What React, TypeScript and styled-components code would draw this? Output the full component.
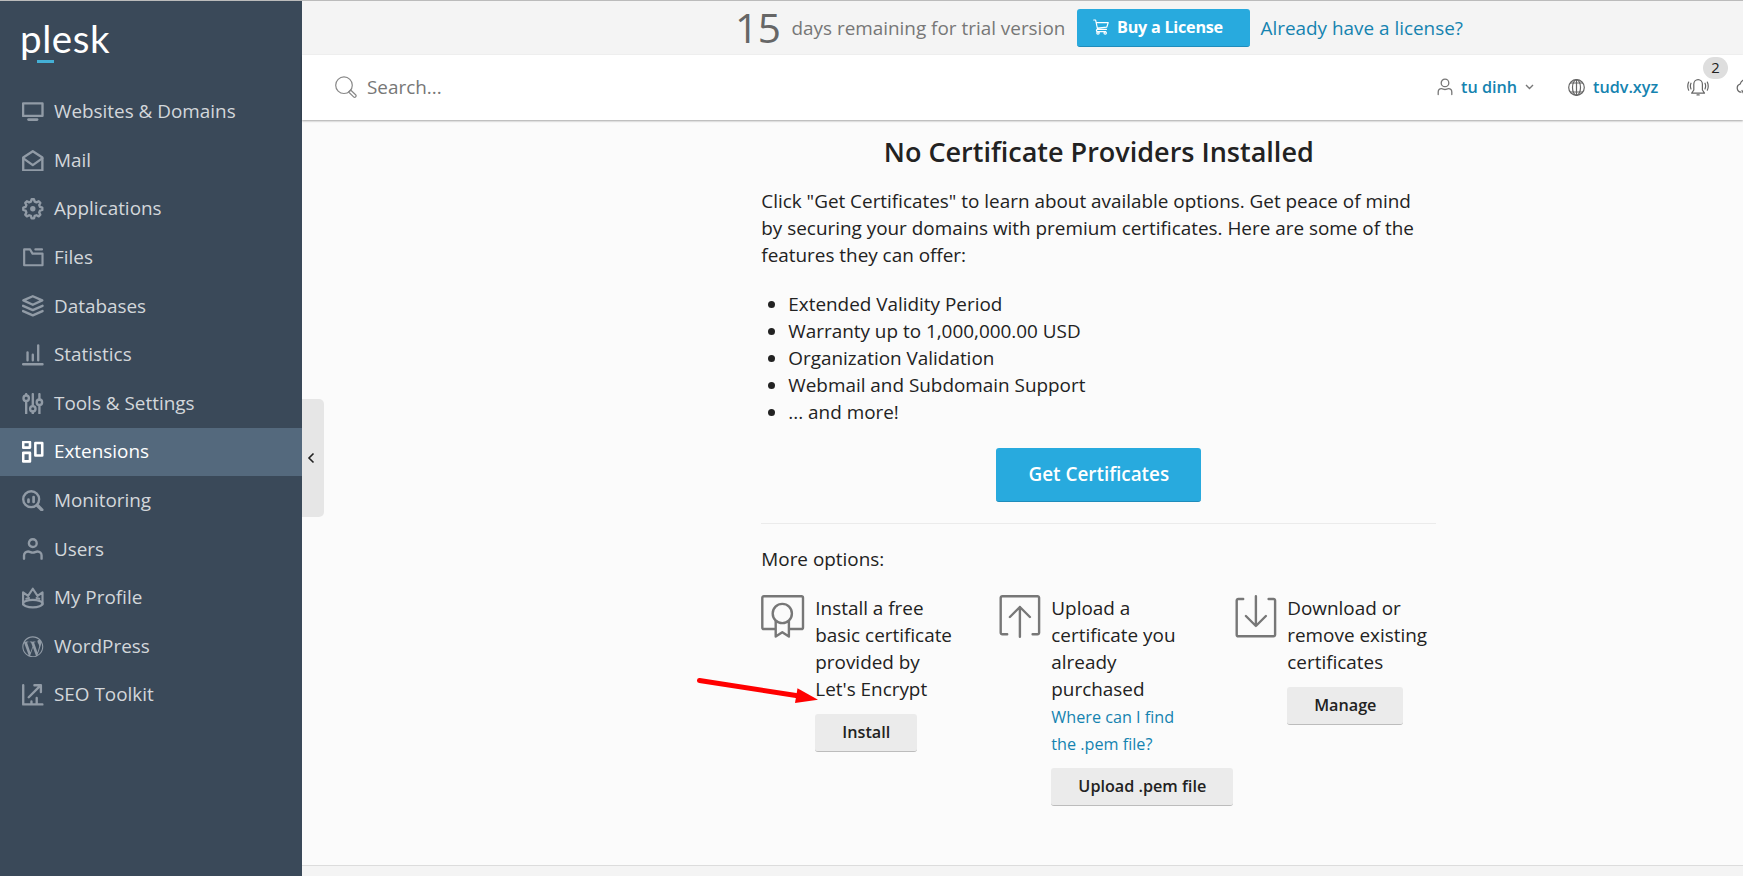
import React from 'react';
import styled, { createGlobalStyle, css } from 'styled-components';
import { FaWordpressSimple } from 'react-icons/fa';

const GlobalStyle = createGlobalStyle`
  *, *::before, *::after { box-sizing: border-box; }
  body {
    margin: 0;
    overflow: hidden;
    font-family: "Open Sans", "Noto Sans", sans-serif;
    font-size: 18.9px;
    line-height: 27px;
    color: #222;
    background: #fbfbfb;
  }
`;

const Page = styled.div`
  display: flex;
  width: 100vw;
  height: 100vh;
  border-top: 1px solid #bbb;
  overflow: hidden;
`;

/* ---------- sidebar ---------- */

const Sidebar = styled.aside`
  flex: 0 0 302px;
  background: #3a4959;
`;

const Brand = styled.div`
  position: relative;
  height: 86.5px;
  padding: 15px 0 0 20px;
  font-family: Lato, sans-serif;
  font-size: 38.5px;
  line-height: 44px;
  letter-spacing: 0.6px;
  color: #fff;

  &::after {
    content: '';
    position: absolute;
    left: 37px;
    top: 59px;
    width: 17px;
    height: 3px;
    background: #44b0d6;
  }
`;

const NavItem = styled.a<{ $active?: boolean }>`
  display: flex;
  align-items: center;
  gap: 10.4px;
  height: 48.6px;
  padding-left: 22px;
  color: #d3d7db;
  font-weight: 500;

  svg {
    flex: none;
    width: 21.6px;
    height: 21.6px;
    color: #919ba6;
  }

  ${(p) =>
    p.$active &&
    css`
      background: #54697d;
      color: #fff;
      svg { color: #fff; }
    `}
`;

const NavLabel = styled.span`
  white-space: nowrap;
`;

/* ---------- right side ---------- */

const Main = styled.main`
  position: relative;
  flex: 1;
  min-width: 0;
  display: flex;
  flex-direction: column;
`;

const TrialBar = styled.div`
  flex: 0 0 54px;
  display: flex;
  align-items: center;
  padding-left: 433px;
  background: #f4f4f4;
  color: #777;
  white-space: nowrap;
`;

const Days = styled.span`
  width: 56.5px;
  font-size: 40.5px;
  line-height: 54px;
  color: #666;
  letter-spacing: -0.5px;
`;

const TrialText = styled.span`
  width: 285.5px;
`;

const Link = styled.a`
  color: #1583b0;
`;

const BuyButton = styled.button`
  display: flex;
  align-items: center;
  gap: 8px;
  width: 173px;
  height: 38px;
  margin-right: 10.5px;
  padding: 0 0 2px 16px;
  border: 0;
  border-bottom: 1px solid #1f8cbb;
  border-radius: 3px;
  background: #28aade;
  color: #fff;
  font: 700 16.2px/24px "Open Sans", sans-serif;
  letter-spacing: -0.25px;
`;

const Header = styled.header`
  z-index: 1;
  flex: 0 0 65px;
  display: flex;
  align-items: center;
  background: #fff;
  box-shadow: 0 1px 2px rgba(0, 0, 0, 0.35);
  white-space: nowrap;
`;

const Search = styled.div`
  flex: 1;
  display: flex;
  align-items: center;
  gap: 10px;
  padding-left: 33px;
  color: #777;
`;

const HeaderTools = styled.div`
  flex: none;
  width: 306px;
  padding-bottom: 1px;
  display: flex;
  align-items: center;
  color: #666;
  font-size: 16.2px;
  font-weight: 600;

  svg { flex: none; }
`;

const Account = styled.div<{ $width: number }>`
  flex: 0 0 ${(p) => p.$width}px;
  display: flex;
  align-items: center;
  gap: 8px;
`;

const BellBox = styled.div`
  position: relative;
  display: flex;
  flex: 0 0 49px;
`;

const Badge = styled.span`
  position: absolute;
  left: 16px;
  top: -21px;
  width: 25px;
  height: 22px;
  border-radius: 11px;
  background: #dedede;
  color: #222;
  font-size: 14.8px;
  font-weight: 500;
  line-height: 21px;
  text-align: center;
`;

const Content = styled.section`
  flex: 1;
  width: 675px;
  margin-left: 459.3px;
  padding-top: 14px;
`;

const Title = styled.h1`
  margin: 0 0 18px;
  font-size: 27px;
  line-height: 36px;
  font-weight: 600;
  text-align: center;
  white-space: nowrap;
`;

const Paragraph = styled.p`
  margin: 0 0 22px;
  white-space: nowrap;
`;

const Features = styled.ul`
  margin: 0 0 22px;
  padding-left: 27px;
`;

const PrimaryButton = styled.button`
  display: block;
  width: 205px;
  height: 54px;
  margin: 0 auto 21px;
  padding: 0;
  border: 0;
  border-bottom: 1px solid #1f8cbb;
  border-radius: 3px;
  background: #28aade;
  color: #fff;
  font: 600 18.9px/27px "Open Sans", sans-serif;
`;

const Divider = styled.hr`
  height: 1px;
  margin: 0 0 22px;
  border: 0;
  background: #ebebeb;
`;

const Options = styled.div`
  display: grid;
  grid-template-columns: 236px 236px 203px;
  margin-top: 21px;
`;

const Option = styled.div`
  display: grid;
  grid-template-columns: 54px 1fr;
  white-space: nowrap;
`;

const OptionBody = styled.div`
  padding-top: 1px;
`;

const HelpLink = styled(Link)`
  display: block;
  margin-bottom: -1px;
  padding-top: 1px;
  font-size: 16.2px;
`;

const Button = styled.button<{ $width: number }>`
  display: block;
  width: ${(p) => p.$width}px;
  height: 38px;
  margin-top: 11px;
  padding: 0 0 2px;
  border: 0;
  border-bottom: 1px solid #bcbcbc;
  border-radius: 3px;
  background: #ebebeb;
  color: #222;
  font: 600 16.2px/24px "Open Sans", sans-serif;
  white-space: nowrap;
`;

const Footer = styled.footer`
  flex: 0 0 11px;
  border-top: 1px solid #dcdcdc;
  background: #f4f4f4;
`;

const Handle = styled.button`
  position: absolute;
  z-index: 2;
  left: 0;
  top: 398px;
  width: 22px;
  height: 118px;
  padding: 0 0 0 5px;
  border: 0;
  border-radius: 0 5px 5px 0;
  background: #e6e6e6;
  display: flex;
  align-items: center;
`;

const Pointer = styled.svg`
  position: absolute;
  left: 392px;
  top: 672px;
`;

/* ---------- icons ---------- */

const Glyph = ({ children, w = 1.75 }: { children: React.ReactNode; w?: number }) => (
  <svg viewBox="0 0 16 16" fill="none" stroke="currentColor" strokeWidth={w} strokeLinecap="round" strokeLinejoin="round">
    {children}
  </svg>
);

const gearPath = (() => {
  const pts: string[] = [];
  for (let i = 0; i < 8; i++) {
    const at = (deg: number, r: number) => {
      const a = ((i * 45 + deg - 90) * Math.PI) / 180;
      return `${(8 + r * Math.cos(a)).toFixed(2)} ${(8 + r * Math.sin(a)).toFixed(2)}`;
    };
    pts.push(`${i ? 'L' : 'M'}${at(-7, 7.1)}L${at(7, 7.1)}L${at(15, 5.5)}L${at(30, 5.5)}`);
  }
  return pts.join('') + 'Z';
})();

const personBody = 'M1.5 15.3V13a3 3 0 0 1 3-3c1.5 0 2 .8 3.5.8s2-.8 3.5-.8a3 3 0 0 1 3 3v2.3';

const icons = {
  monitor: (
    <Glyph>
      <rect x="0.8" y="1.8" width="14.4" height="9.2" />
      <path d="M4.8 13.8h6.4" strokeWidth="1.9" />
    </Glyph>
  ),
  mail: (
    <Glyph>
      <path d="M8 .9l7.1 4.7v9.5H.9V5.6z" />
      <path d="M1 6.2l7 5 7-5" />
    </Glyph>
  ),
  gear: (
    <Glyph>
      <path d={gearPath} />
      <circle cx="8" cy="8" r="2" fill="currentColor" stroke="none" />
    </Glyph>
  ),
  folder: (
    <Glyph w={1.6}>
      <path d="M1.6 1.8H6l1.8 3.1h7.4v8.6H1.6z" />
      <path d="M9.9 1.8h4.9" />
    </Glyph>
  ),
  layers: (
    <Glyph>
      <path d="M8 .9l7 3.1-7 3.2L1 4z" />
      <path d="M.8 8L8 11.2 15.2 8M.8 11.9L8 15.1l7.2-3.2" />
    </Glyph>
  ),
  stats: (
    <Glyph>
      <path d="M.8 15h14.4M4.1 6.2v5.8M8 8v4M12 1v11" />
    </Glyph>
  ),
  tools: (
    <Glyph>
      <path d="M3.1.8v1M3.1 6v9.2M8 .8v8.4M8 13.6v1.6M12.9.8v4M12.9 9v6.2" />
      <circle cx="3.1" cy="3.8" r="2" />
      <circle cx="8" cy="11.7" r="2" />
      <circle cx="12.9" cy="6.8" r="2" />
    </Glyph>
  ),
  blocks: (
    <Glyph w={1.9}>
      <rect x="0.9" y="0.8" width="5" height="4.1" />
      <rect x="0.9" y="8.8" width="5" height="6.3" />
      <rect x="9.9" y="1.5" width="5.1" height="9.2" />
    </Glyph>
  ),
  monitoring: (
    <Glyph>
      <circle cx="6.8" cy="6.8" r="5.9" />
      <path d="M11.5 11.5l3.2 3.2" strokeWidth="2.5" />
      <path d="M4.8 7.2v1.6M8.6 5.2v3.6" strokeWidth="2" />
    </Glyph>
  ),
  user: (
    <Glyph>
      <circle cx="8" cy="3.8" r="2.9" />
      <path d={personBody} />
    </Glyph>
  ),
  crown: (
    <Glyph w={1.6}>
      <path d="M.8 13V4l3.7 2.6L8 1.3l3.5 5.3L15.2 4v9" />
      <path d="M3.2 8.7l2-.5M10.8 8.2l2 .5" />
      <ellipse cx="8" cy="12.3" rx="7.2" ry="2.8" />
    </Glyph>
  ),
  wordpress: <FaWordpressSimple />,
  seo: (
    <Glyph>
      <path d="M.9.9v14.2h14.2M5 9.8l8.6-8.6M9.2.9H14v5M7 13v2M10.9 10.4V15" />
    </Glyph>
  ),
};

const nav: { label: string; icon: keyof typeof icons; active?: boolean }[] = [
  { label: 'Websites & Domains', icon: 'monitor' },
  { label: 'Mail', icon: 'mail' },
  { label: 'Applications', icon: 'gear' },
  { label: 'Files', icon: 'folder' },
  { label: 'Databases', icon: 'layers' },
  { label: 'Statistics', icon: 'stats' },
  { label: 'Tools & Settings', icon: 'tools' },
  { label: 'Extensions', icon: 'blocks', active: true },
  { label: 'Monitoring', icon: 'monitoring' },
  { label: 'Users', icon: 'user' },
  { label: 'My Profile', icon: 'crown' },
  { label: 'WordPress', icon: 'wordpress' },
  { label: 'SEO Toolkit', icon: 'seo' },
];

const CartIcon = () => (
  <svg width="16" height="16" viewBox="0 0 16 16" fill="none" stroke="#fff" strokeWidth="1.2" strokeLinecap="round" strokeLinejoin="round">
    <path d="M.7 1h1.9l2 9.4h8.8M3.2 3.6h12l-1.4 4.6-9.4 1" />
    <path d="M4.6 10.4c-1.6.2-1.6 2.2 0 2.2h8" />
    <circle cx="5" cy="14" r="1.2" />
    <circle cx="12.2" cy="14" r="1.2" />
  </svg>
);

const SearchIcon = () => (
  <svg width="22" height="23" viewBox="0 0 22 23" fill="none" stroke="#888" strokeWidth="1.2">
    <circle cx="9" cy="9.2" r="8.3" />
    <path d="M13.6 16l2-2 5 4.8a1.45 1.45 0 0 1-2 2.1z" strokeLinejoin="round" />
  </svg>
);

const PersonIcon = () => (
  <svg width="16" height="18" viewBox="0 0 16 18" fill="none" stroke="#777" strokeWidth="1.3" strokeLinecap="round">
    <circle cx="8" cy="4.9" r="3.8" />
    <path d="M1.2 16.5v-2.6a3.3 3.3 0 0 1 3.3-3.2c1.5 0 2 .8 3.5.8s2-.8 3.5-.8a3.3 3.3 0 0 1 3.3 3.2v2.6" />
  </svg>
);

const GlobeIcon = () => (
  <svg width="17" height="17" viewBox="0 0 17 17" fill="none" stroke="#666" strokeWidth="1.2">
    <circle cx="8.5" cy="8.5" r="7.8" />
    <ellipse cx="8.5" cy="8.5" rx="4" ry="7.8" />
    <path d="M8.5.7v15.6M2.2 4h12.6M2.2 13h12.6" />
  </svg>
);

const BellIcon = () => (
  <svg width="22" height="18" viewBox="0 0 22 18" fill="none" stroke="#666" strokeWidth="1.2" strokeLinecap="round" strokeLinejoin="round">
    <path d="M6.8 12V6.2a4.3 4.6 0 0 1 8.6 0V12l2.1 3.2H4.7z" />
    <path d="M10 16.9h2.2M4 5.2c-.8 1.8-.8 4 0 5.8M18 5.2c.8 1.8.8 4 0 5.8M1.7 4c-1.2 2.7-1.2 5.6 0 8.2M20.3 4c1.2 2.7 1.2 5.6 0 8.2" />
  </svg>
);

const CloudIcon = () => (
  <svg width="22" height="18" viewBox="0 0 22 18" fill="none" stroke="#666" strokeWidth="1.2" strokeLinecap="round">
    <path d="M5 14.2a4.2 4.2 0 0 1-.8-8.2 6 6 0 0 1 11.6 0 4.2 4.2 0 0 1 1 8.2M6 12.5l2 4" />
  </svg>
);

const OptionIcon = ({ children }: { children: React.ReactNode }) => (
  <svg width="45" height="45" viewBox="0 0 45 45" fill="none" stroke="#777" strokeWidth="2.4" strokeLinecap="round" strokeLinejoin="round">
    {children}
  </svg>
);

const CertificateIcon = () => (
  <OptionIcon>
    <path d="M13.5 35H2.9a1.6 1.6 0 0 1-1.6-1.6V3.8a1.6 1.6 0 0 1 1.6-1.6h37.5A1.6 1.6 0 0 1 42 3.8v29.6a1.6 1.6 0 0 1-1.6 1.6H29" />
    <circle cx="21.3" cy="19.5" r="9.6" />
    <path d="M14.7 27v15.5l6.6-4.2 6.6 4.2V27" />
  </OptionIcon>
);

const UploadIcon = () => (
  <OptionIcon>
    <path d="M10.2 40.3H5.3a1.6 1.6 0 0 1-1.6-1.6V3.8a1.6 1.6 0 0 1 1.6-1.6h35.2a1.6 1.6 0 0 1 1.6 1.6v34.9a1.6 1.6 0 0 1-1.6 1.6h-4.9" />
    <path d="M22.9 42.8V13M12.9 23l10-10 10 10" />
  </OptionIcon>
);

const DownloadIcon = () => (
  <OptionIcon>
    <path d="M10.2 5H5.3a1.6 1.6 0 0 0-1.6 1.6v34.1a1.6 1.6 0 0 0 1.6 1.6h35.2a1.6 1.6 0 0 0 1.6-1.6V6.6A1.6 1.6 0 0 0 40.5 5h-4.9" />
    <path d="M22.9 2.2v29.6M12.9 22l10 10 10-10" />
  </OptionIcon>
);

export default function App() {
  return (
    <>
      <GlobalStyle />
      <Page>
        <Sidebar>
          <Brand>plesk</Brand>
          <nav>
            {nav.map((n) => (
              <NavItem key={n.label} $active={n.active}>
                {icons[n.icon]}
                <NavLabel>{n.label}</NavLabel>
              </NavItem>
            ))}
          </nav>
        </Sidebar>
        <Main>
          <TrialBar>
            <Days>15</Days>
            <TrialText>days remaining for trial version</TrialText>
            <BuyButton>
              <CartIcon />
              Buy a License
            </BuyButton>
            <Link>Already have a license?</Link>
          </TrialBar>
          <Header>
            <Search>
              <SearchIcon />
              <span>Search...</span>
            </Search>
            <HeaderTools>
              <Account $width={131}>
                <PersonIcon />
                <Link>tu dinh</Link>
                <svg width="9" height="6" viewBox="0 0 9 6" fill="none" stroke="#777" strokeWidth="1.4">
                  <path d="M1 1l3.5 3.5L8 1" />
                </svg>
              </Account>
              <Account $width={119}>
                <GlobeIcon />
                <Link>tudv.xyz</Link>
              </Account>
              <BellBox>
                <BellIcon />
                <Badge>2</Badge>
              </BellBox>
              <CloudIcon />
            </HeaderTools>
          </Header>
          <Content>
            <Title>No Certificate Providers Installed</Title>
            <Paragraph>
              Click "Get Certificates" to learn about available options. Get peace of mind
              <br />
              by securing your domains with premium certificates. Here are some of the
              <br />
              features they can offer:
            </Paragraph>
            <Features>
              <li>Extended Validity Period</li>
              <li>Warranty up to 1,000,000.00 USD</li>
              <li>Organization Validation</li>
              <li>Webmail and Subdomain Support</li>
              <li>... and more!</li>
            </Features>
            <PrimaryButton>Get Certificates</PrimaryButton>
            <Divider />
            <div>More options:</div>
            <Options>
              <Option>
                <CertificateIcon />
                <OptionBody>
                  Install a free
                  <br />
                  basic certificate
                  <br />
                  provided by
                  <br />
                  Let's Encrypt
                  <Button $width={102}>Install</Button>
                </OptionBody>
              </Option>
              <Option>
                <UploadIcon />
                <OptionBody>
                  Upload a
                  <br />
                  certificate you
                  <br />
                  already
                  <br />
                  purchased
                  <HelpLink>
                    Where can I find
                    <br />
                    the .pem file?
                  </HelpLink>
                  <Button $width={182}>Upload .pem file</Button>
                </OptionBody>
              </Option>
              <Option>
                <DownloadIcon />
                <OptionBody>
                  Download or
                  <br />
                  remove existing
                  <br />
                  certificates
                  <Button $width={116}>Manage</Button>
                </OptionBody>
              </Option>
            </Options>
          </Content>
          <Footer />
          <Handle>
            <svg width="8" height="12" viewBox="0 0 8 12" fill="none" stroke="#222" strokeWidth="1.6">
              <path d="M6.5 1.5L2 6l4.5 4.5" />
            </svg>
          </Handle>
          <Pointer width="128" height="34" viewBox="0 0 128 34" fill="#f00">
            <path d="M5.5 7.5L102 22.5" stroke="#f00" strokeWidth="5" strokeLinecap="round" />
            <path d="M103.5 15.3L124 26.7l-23 3.3z" />
          </Pointer>
        </Main>
      </Page>
    </>
  );
}
